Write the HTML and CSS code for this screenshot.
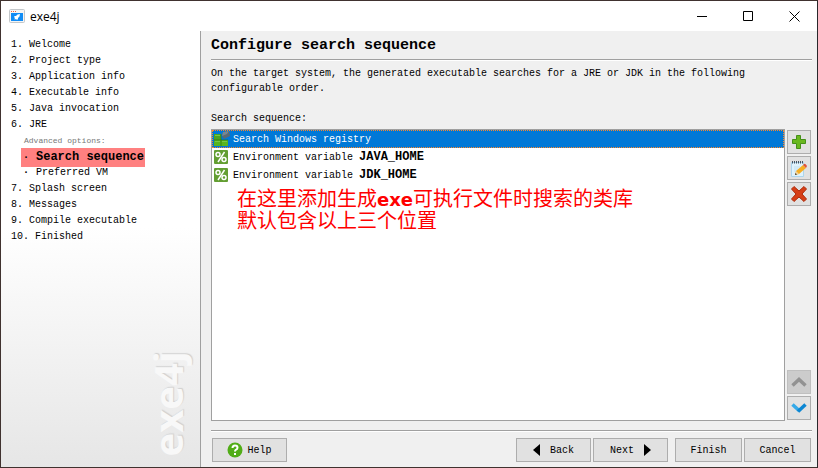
FILE: index.html
```html
<!DOCTYPE html>
<html lang="en">
<head>
<meta charset="utf-8">
<title>exe4j</title>
<link rel="stylesheet" href="styles.css">
</head>
<body>
<div class="window">
  <header class="titlebar">
    <svg class="app-icon" width="16" height="14" viewBox="0 0 16 14" aria-hidden="true">
      <rect x=".5" y=".5" width="15" height="13" rx="1" fill="#f4f4f4" stroke="#c3c7ca"/>
      <path d="M2 2h1v1H2zM4 2h1v1H4zM6 2h1v1H6z" fill="#f0653c"/>
      <path d="M2 4h12v8H2z" fill="#118cf5"/>
      <path d="M11 5 8.500 5.500 7 7 5.500 7 5 8.500 6 8.500 5.500 10.500 7.500 10 7.500 11 9 10.300 9 9 10.500 7.500Z" fill="#fff"/>
    </svg>
    <span class="app-name">exe4j</span>
    <button class="caption" type="button" aria-label="Minimize"><svg width="11" height="11" viewBox="0 0 11 11"><path d="M0 5.500h10" stroke="#000"/></svg></button>
    <button class="caption" type="button" aria-label="Maximize"><svg width="11" height="11" viewBox="0 0 11 11"><path d="M.5.5h9v9h-9z" fill="none" stroke="#000"/></svg></button>
    <button class="caption" type="button" aria-label="Close"><svg width="11" height="11" viewBox="0 0 11 11"><path d="m.5.5 10 10m0-10-10 10" stroke="#000"/></svg></button>
  </header>
  <div class="body">
    <nav class="sidebar">
      <ul class="steps">
        <li>1. Welcome</li>
        <li>2. Project type</li>
        <li>3. Application info</li>
        <li>4. Executable info</li>
        <li>5. Java invocation</li>
        <li>6. JRE
          <p class="sub-title">Advanced options:</p>
          <ul class="substeps">
            <li><span class="current"><span class="bullet">·</span><b>Search sequence</b></span></li>
            <li><span class="sub"><span class="bullet">·</span>Preferred VM</span></li>
          </ul>
        </li>
        <li>7. Splash screen</li>
        <li>8. Messages</li>
        <li>9. Compile executable</li>
        <li>10. Finished</li>
      </ul>
      <div class="brand">exe4j</div>
    </nav>
    <main class="content">
      <h1>Configure search sequence</h1>
      <p class="intro">On the target system, the generated executable searches for a JRE or JDK in the following configurable order.</p>
      <p class="label" id="seq-label">Search sequence:</p>
      <div class="editor">
        <div class="list-box">
          <ul class="list" role="listbox" aria-labelledby="seq-label">
            <li class="entry selected" role="option" aria-selected="true">
              <svg width="16" height="16" viewBox="0 0 16 16" aria-hidden="true">
                <path d="M0 3h7v6H0z" fill="#4da321"/><path d="M0 9h7v6H0zM7 9h7v6H7z" fill="#58b51f"/>
                <path d="M0 9h14M7 3v12" stroke="#2d7411" stroke-width=".7"/><path d="M1 4h5v1H1zM1 10h5v1H1zM8 10h5v1H8z" fill="#76c945"/>
                <path d="m9 1 6-1 1 5-6 3-2-3z" fill="#5c6973"/><path d="m9 1 6-1-2 3-5 2z" fill="#788791"/>
              </svg>
              <span>Search Windows registry</span>
            </li>
            <li class="entry" role="option">
              <svg width="14" height="14" viewBox="0 0 14 14" aria-hidden="true"><rect width="14" height="14" rx="1" fill="#639e32"/><path d="M10.500 2 4 12" stroke="#fff" stroke-width="1.500"/><circle cx="4" cy="4.500" r="2" fill="none" stroke="#fff" stroke-width="1.500"/><circle cx="10" cy="9.500" r="2" fill="none" stroke="#fff" stroke-width="1.500"/></svg>
              <span>Environment variable <b>JAVA_HOME</b></span>
            </li>
            <li class="entry" role="option">
              <svg width="14" height="14" viewBox="0 0 14 14" aria-hidden="true"><rect width="14" height="14" rx="1" fill="#639e32"/><path d="M10.500 2 4 12" stroke="#fff" stroke-width="1.500"/><circle cx="4" cy="4.500" r="2" fill="none" stroke="#fff" stroke-width="1.500"/><circle cx="10" cy="9.500" r="2" fill="none" stroke="#fff" stroke-width="1.500"/></svg>
              <span>Environment variable <b>JDK_HOME</b></span>
            </li>
          </ul>
          <p class="note" lang="zh-CN">在这里添加生成<b>exe</b>可执行文件时搜索的类库<br>默认包含以上三个位置</p>
        </div>
        <div class="tools">
          <button class="tool" type="button" aria-label="Add"><svg width="16" height="16" viewBox="0 0 16 16"><path d="M5.500 1.500h4v4h5v4h-5v5h-4v-5h-4v-4h4z" fill="#69b81f" stroke="#459018"/></svg></button>
          <button class="tool" type="button" aria-label="Edit"><svg width="16" height="17" viewBox="0 0 16 17"><path d="M.5 2.500h12v14H.5z" fill="#dff2fc" stroke="#acd5ec"/><path d="M1.500 1v2.500M3.500 1v2.500M5.500 1v2.500M7.500 1v2.500M9.500 1v2.500M11.500 1v2.500" stroke="#475461"/><path d="M3 7h6M3 9h4M3 11h3" stroke="#c3e0ef"/><path d="m4 15 1-4 7-6 3 3-7 6z" fill="#f6ae22"/><path d="m12 5 1-1q1-1 3 2l-1 2z" fill="#df533c"/><path d="m4 15 1-4 3 3z" fill="#efd5a1"/><path d="m4 15 .5-2 1.500 1.500z" fill="#333"/></svg></button>
          <button class="tool" type="button" aria-label="Remove"><svg width="16" height="16" viewBox="0 0 16 16"><path d="M3 .5 8 5l5-4.500L15.500 3 11 8l4.500 5-2.500 2.500L8 11l-5 4.500L.5 13 5 8 .5 3z" fill="#d63e16" stroke="#ad2c0c"/></svg></button>
          <button class="tool up" type="button" aria-label="Move up" disabled><svg width="16" height="10" viewBox="0 0 16 10"><path d="m1.500 8.500 6.500-6 6.500 6" fill="none" stroke="#929292" stroke-width="3.500"/></svg></button>
          <button class="tool" type="button" aria-label="Move down"><svg width="16" height="10" viewBox="0 0 16 10"><path d="m1.500 1.500 6.500 6" fill="none" stroke="#35a9e8" stroke-width="3.500"/><path d="m7 8.500 7.500-7" fill="none" stroke="#0b86d3" stroke-width="3.500"/></svg></button>
        </div>
      </div>
      <footer class="actions">
        <button class="btn help" type="button"><svg width="16" height="16" viewBox="0 0 16 16" aria-hidden="true"><circle cx="8" cy="8" r="7.500" fill="#51ad17"/><path d="M5.500 6q0-2.500 2.500-2.500t2.500 2.200Q10.500 7 8.800 7.800 8 8.200 8 9.500" fill="none" stroke="#fff" stroke-width="2"/><path d="M7 11h2v2H7z" fill="#fff"/></svg>Help</button>
        <button class="btn back" type="button"><svg width="7" height="12" viewBox="0 0 7 12" aria-hidden="true"><path d="M7 0v12L0 6z"/></svg>Back</button>
        <button class="btn next" type="button">Next<svg width="7" height="12" viewBox="0 0 7 12" aria-hidden="true"><path d="M0 0v12l7-6z"/></svg></button>
        <button class="btn finish" type="button">Finish</button>
        <button class="btn" type="button">Cancel</button>
      </footer>
    </main>
  </div>
</div>
</body>
</html>
```
FILE: styles.css
```css
* { box-sizing: border-box; }
body, h1, p, ul { margin: 0; padding: 0; }
ul { list-style: none; }
svg { display: block; flex: none; }

body, button {
  font-family: "Liberation Mono", monospace;
  font-size: 10px;
  color: #000;
}

.window {
  display: flex;
  flex-direction: column;
  height: 100vh;
  border: 1px solid #40322f;
  border-right-color: #29282b;
  background: #f0f0f0;
}

.titlebar {
  display: flex;
  align-items: center;
  flex: none;
  height: 30px;
  padding-left: 8px;
  background: #fff;
}
.app-name {
  flex: 1;
  margin-left: 5px;
  font: 12px "Open Sans", sans-serif;
}
.caption {
  display: flex;
  align-items: center;
  justify-content: center;
  width: 46px;
  height: 30px;
  padding: 0;
  border: 0;
  background: none;
}

.body { display: flex; flex: 1; min-height: 0; }

.sidebar {
  display: flex;
  flex-direction: column;
  justify-content: space-between;
  flex: none;
  width: 200px;
  padding: 6px 12px 11px 10px;
  border-right: 1px solid #a0a0a0;
  background: linear-gradient(#fff 45%, #e6e6e6);
}
.steps { line-height: 16px; }
.sub-title { padding-left: 13px; font-size: 8px; color: #777; }
.substeps { padding-left: 10px; }
.substeps li { height: 16px; }
.current, .sub { padding: 4px 2px; }
.current { padding-right: 1px; background: #ff8080; }
.current b { font-size: 12px; }
.bullet { display: inline-block; width: 13px; font-weight: bold; }
.brand {
  align-self: flex-end;
  writing-mode: vertical-rl;
  transform: rotate(180deg);
  font: bold 40px/40px "Open Sans", sans-serif;
  color: #f8f8f8;
  text-shadow: 1px 1px 1px #d0d0d0;
}

.content {
  display: flex;
  flex-direction: column;
  flex: 1;
  min-width: 0;
  padding: 5px 5px 5px 10px;
}
h1 {
  padding-bottom: 3px;
  border-bottom: 1px solid #a0a0a0;
  box-shadow: 0 1px #fff;
  font-size: 15px;
  line-height: 20px;
}
.intro { max-width: 560px; margin-top: 6px; line-height: 15px; }
.label { margin: 15px 0 3px; line-height: 15px; }

.editor { display: flex; flex: 1; gap: 2px; min-height: 0; }
.list-box {
  flex: 1;
  min-width: 0;
  border: 1px solid #a0a0a0;
  background: #fff;
}
.entry {
  display: flex;
  align-items: center;
  gap: 5px;
  height: 18px;
  padding-left: 2px;
}
.entry b { font-size: 12px; }
.selected {
  gap: 3px;
  background: #0078d7;
  color: #fff;
  outline: 1px dotted #ff8728;
  outline-offset: -1px;
}
.note {
  padding: 3px 0 0 25px;
  font: 20px/22px "Noto Sans CJK SC", sans-serif;
  color: #f00;
}
.note b { font: bold 18px/18px "DejaVu Sans", sans-serif; }

.tools { display: flex; flex-direction: column; gap: 2px; padding: 1px 1px 1px 0; }
.tool {
  display: flex;
  align-items: center;
  justify-content: center;
  width: 24px;
  height: 24px;
  padding: 0;
  border: 1px solid #adadad;
  background: #e1e1e1;
}
.tool:disabled { border-color: #bfbfbf; background: #ccc; }
.up { margin-top: auto; }

.actions {
  display: flex;
  gap: 2px;
  margin-top: 9px;
  padding: 7px 1px 0;
  border-top: 1px solid #a0a0a0;
  box-shadow: inset 0 1px #fff;
}
.btn {
  display: flex;
  align-items: center;
  justify-content: center;
  width: 67px;
  height: 24px;
  padding: 0;
  border: 1px solid #adadad;
  background: #e1e1e1;
}
.help { gap: 4px; width: 75px; margin-right: auto; }
.back, .next { gap: 10px; width: 75px; }
.finish { margin-left: 5px; }
```
